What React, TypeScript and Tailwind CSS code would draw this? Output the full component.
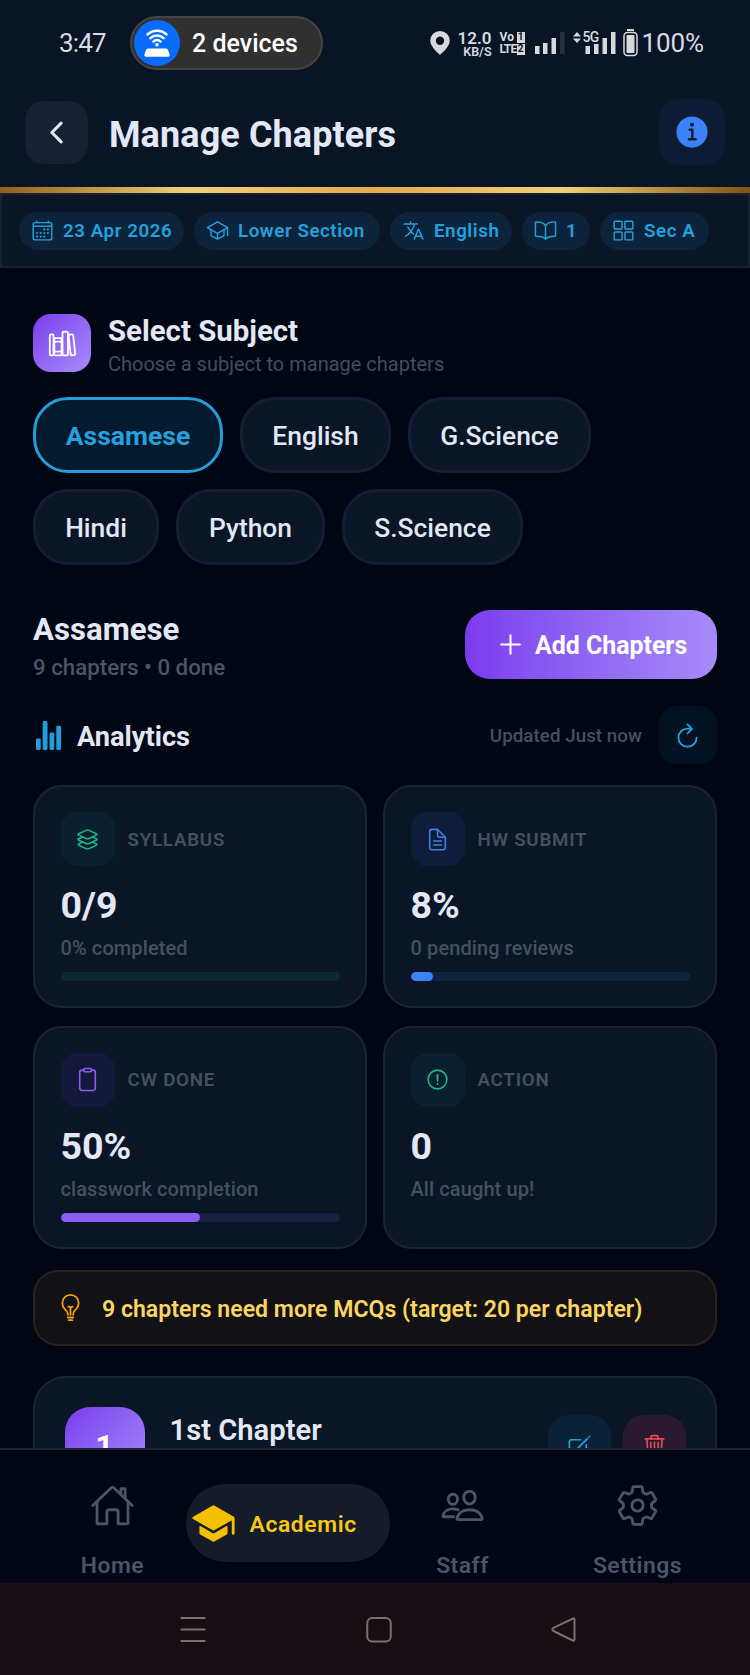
import type { ReactNode } from 'react';
import type { IconType } from 'react-icons';
import {
  IoAdd,
  IoAlertCircleOutline,
  IoBookOutline,
  IoBulbOutline,
  IoCalendarOutline,
  IoChevronBack,
  IoClipboardOutline,
  IoCreateOutline,
  IoDocumentTextOutline,
  IoGridOutline,
  IoHomeOutline,
  IoInformationCircle,
  IoLanguageOutline,
  IoLayersOutline,
  IoLibraryOutline,
  IoPeopleOutline,
  IoRefresh,
  IoSchool,
  IoSchoolOutline,
  IoSettingsOutline,
  IoStatsChart,
  IoTrashOutline,
} from 'react-icons/io5';

function StatusBar() {
  return (
    <div className="flex h-[86px] shrink-0 items-center pl-[59px] pr-[46px] text-[#d6dae2]">
      <span className="w-[71px] text-[26px] leading-none tracking-[-0.8px]">3:47</span>
      <div className="flex h-[54px] w-[193px] items-center rounded-full border-2 border-[#454545] bg-[#303030] pl-[2px]">
        <svg viewBox="0 0 46 46" className="size-[46px] shrink-0">
          <circle cx="23" cy="23" r="23" fill="#0a6cff" />
          <g fill="none" stroke="#fff" strokeWidth="2.4" strokeLinecap="round">
            <path d="M13.5 14.5a14 14 0 0 1 19 0" />
            <path d="M16.4 18.2a9.4 9.4 0 0 1 13.2 0" />
            <path d="M19.4 21.6a5 5 0 0 1 7.2 0" />
          </g>
          <circle cx="23" cy="24.8" r="1.8" fill="#fff" />
          <path d="M14 28.5h18a2 2 0 0 1 2 1.6l1.6 4.4a1.6 1.6 0 0 1-1.6 2.2H12a1.6 1.6 0 0 1-1.6-2.2L12 30.1a2 2 0 0 1 2-1.6z" fill="#fff" />
        </svg>
        <span className="ml-[12px] whitespace-nowrap text-[25px] font-medium leading-none text-white">2 devices</span>
      </div>
      <div className="ml-auto flex items-center">
        <svg viewBox="0 0 20 24" className="h-[24px] w-[20px] fill-[#d8d8da]">
          <path fillRule="evenodd" d="M10 0a9.8 9.8 0 0 1 9.8 9.8C19.8 16 10 24 10 24S.2 16 .2 9.8A9.8 9.8 0 0 1 10 0zm0 5.5a4.2 4.2 0 1 0 0 8.4 4.2 4.2 0 0 0 0-8.4z" />
        </svg>
        <div className="ml-[9px] flex w-[33px] flex-col items-end pt-[2px] font-semibold">
          <span className="text-[17px] leading-[14px]">12.0</span>
          <span className="text-[12.5px] leading-[13px]">KB/S</span>
        </div>
        <div className="ml-[8px] grid grid-cols-[16px_8px] gap-x-[1px] gap-y-[1px] text-[12px] font-bold leading-[11px]">
          <span className="scale-y-110 tracking-[0.2px]">Vo</span>
          <span className="flex h-[11px] w-[8px] items-center justify-center bg-[#d8d8da] text-[10px] leading-none text-[#0a1424]">1</span>
          <span className="scale-y-110 tracking-[-0.8px]">LTE</span>
          <span className="flex h-[11px] w-[8px] items-center justify-center bg-[#d8d8da] text-[10px] leading-none text-[#0a1424]">2</span>
        </div>
        <svg viewBox="0 0 30 22" className="ml-[10px] h-[22px] w-[30px] fill-[#d8d8da]">
          <rect x="0" y="14" width="4.5" height="8" />
          <rect x="8" y="11" width="4.5" height="11" />
          <rect x="16.5" y="6" width="4.5" height="16" />
          <rect x="25" y="0" width="4.5" height="22" fill="#263040" />
        </svg>
        <div className="relative ml-[8px] h-[24px] w-[43px]">
          <svg viewBox="0 0 43 24" className="size-full fill-[#d8d8da]">
            <path d="M4 1l4 4.5H0zM4 12L0 7.5h8z" />
            <rect x="12.5" y="15" width="4.5" height="8" />
            <rect x="21" y="13" width="4.5" height="10" />
            <rect x="29.5" y="7" width="4.5" height="16" />
            <rect x="38" y="1" width="4.5" height="22" />
          </svg>
          <span className="absolute left-[10px] top-[1px] text-[14px] font-medium leading-[11px] tracking-[-0.8px]">5G</span>
        </div>
        <svg viewBox="0 0 15 28" className="ml-[7px] h-[28px] w-[15px] fill-[#d8d8da]">
          <rect x="4" y="0" width="7" height="2" />
          <rect x="1" y="3.5" width="13" height="23" rx="3.5" fill="none" stroke="#d8d8da" strokeWidth="1.5" />
          <rect x="3.5" y="6" width="8" height="18" rx="1" />
        </svg>
        <span className="ml-[4px] text-[26px] leading-none tracking-[-0.1px]">100%</span>
      </div>
    </div>
  );
}

function Header() {
  return (
    <header className="flex h-[101px] shrink-0 items-start justify-between px-[25px]">
      <div className="flex items-center pt-[15px]">
        <div className="flex size-[63px] items-center justify-center rounded-[19px] bg-[#172133] text-[#e2e8f0]">
          <IoChevronBack size={33} />
        </div>
        <h1 className="ml-[21px] mt-[5px] text-[36px] font-bold leading-none tracking-[0.1px] text-[#e2e8f5]">Manage Chapters</h1>
      </div>
      <div className="mt-[13px] flex size-[66px] items-center justify-center rounded-[20px] bg-[#0d1c34] text-[#3b82f6]">
        <IoInformationCircle size={40} />
      </div>
    </header>
  );
}

const filters: { icon: IconType; label: string; width: string }[] = [
  { icon: IoCalendarOutline, label: '23 Apr 2026', width: 'w-[165px]' },
  { icon: IoSchoolOutline, label: 'Lower Section', width: 'w-[186px]' },
  { icon: IoLanguageOutline, label: 'English', width: 'w-[122px]' },
  { icon: IoBookOutline, label: '1', width: 'w-[68px]' },
  { icon: IoGridOutline, label: 'Sec A', width: 'w-[109px]' },
];

function FilterStrip() {
  return (
    <div className="flex h-[75px] shrink-0 items-center gap-[10px] border-2 border-[#162036] bg-[#0a1525] px-[17px]">
      {filters.map(({ icon: Icon, label, width }) => (
        <div key={label} className={`flex h-[38px] shrink-0 items-center gap-[9px] rounded-[19px] bg-[#0c243b] pl-[12px] text-[#25a0dc] ${width}`}>
          <Icon size={23} className="shrink-0" />
          <span className="mt-[1px] whitespace-nowrap text-[18.75px] font-semibold leading-none tracking-[0.55px]">{label}</span>
        </div>
      ))}
    </div>
  );
}

const subjects = [
  { name: 'Assamese', width: 'w-[190px]', active: true },
  { name: 'English', width: 'w-[151px]' },
  { name: 'G.Science', width: 'w-[183px]' },
  { name: 'Hindi', width: 'w-[126px]' },
  { name: 'Python', width: 'w-[149px]' },
  { name: 'S.Science', width: 'w-[181px]' },
];

function SubjectPicker() {
  return (
    <section>
      <div className="flex h-[58px] items-start">
        <div className="flex size-[58px] items-center justify-center rounded-[18px] bg-linear-to-br from-[#7c3aed] to-[#a78bfa] text-white">
          <IoLibraryOutline size={29} />
        </div>
        <div className="ml-[17px]">
          <h2 className="text-[29.4px] font-bold leading-[34px] text-[#e2e8f5]">Select Subject</h2>
          <p className="text-[20px] leading-[32px] text-[#434d5e]">Choose a subject to manage chapters</p>
        </div>
      </div>
      <div className="mt-[25px] flex flex-wrap gap-x-[17px] gap-y-[16px]">
        {subjects.map(({ name, width, active }) => (
          <div
            key={name}
            className={`flex h-[76px] items-center justify-center rounded-[35px] border-3 pt-[2px] leading-none ${width} ${
              active
                ? 'border-[#259ddb] bg-[#041a2e] text-[26.5px] font-bold text-[#25a0dc]'
                : 'border-[#151d35] bg-[#0a1525] text-[26.4px] font-medium text-[#e2e8f5]'
            }`}
          >
            {name}
          </div>
        ))}
      </div>
    </section>
  );
}

interface StatProps {
  icon: IconType;
  tint: string;
  label: string;
  value: string;
  note: string;
  track?: string;
  fill?: string;
  percent?: number;
}

function StatCard({ icon: Icon, tint, label, value, note, track, fill, percent = 0 }: StatProps) {
  return (
    <div className="h-[223px] rounded-[29px] border-2 border-[#182338] bg-[#0a1525] px-[25.5px] pt-[25px]">
      <div className="flex items-center gap-[13px]">
        <div className={`flex size-[54px] items-center justify-center rounded-[16px] ${tint}`}>
          <Icon size={25} />
        </div>
        <span className="mt-[2px] text-[18.75px] font-semibold leading-none tracking-[0.75px] text-[#455061]">{label}</span>
      </div>
      <div className="mt-[19px] text-[37.5px] font-bold leading-[40px] text-[#e2e8f5]">{value}</div>
      <div className="mt-[11px] text-[20px] font-medium leading-[24px] tracking-[0.1px] text-[#455061]">{note}</div>
      {track && (
        <div className={`mt-[12px] h-[9px] overflow-hidden rounded-full ${track}`}>
          <div className={`h-full rounded-full ${fill}`} style={{ width: `${percent}%` }} />
        </div>
      )}
    </div>
  );
}

const stats: StatProps[] = [
  { icon: IoLayersOutline, tint: 'bg-[#0a2030] text-[#20b489]', label: 'SYLLABUS', value: '0/9', note: '0% completed', track: 'bg-[#0c2833]', fill: 'bg-[#10b981]', percent: 0 },
  { icon: IoDocumentTextOutline, tint: 'bg-[#0e1d39] text-[#427fe4]', label: 'HW SUBMIT', value: '8%', note: '0 pending reviews', track: 'bg-[#10233f]', fill: 'bg-[#3b82f6]', percent: 8 },
  { icon: IoClipboardOutline, tint: 'bg-[#14183a] text-[#8b5fe8]', label: 'CW DONE', value: '50%', note: 'classwork completion', track: 'bg-[#1a1e40]', fill: 'bg-[#8b5cf6]', percent: 50 },
  { icon: IoAlertCircleOutline, tint: 'bg-[#0a2030] text-[#20b489]', label: 'ACTION', value: '0', note: 'All caught up!' },
];

function Analytics() {
  return (
    <section>
      <div className="mt-[27px] flex h-[58px] items-center">
        <IoStatsChart size={31} className="text-[#219ddb]" />
        <h3 className="ml-[13px] mt-[5px] text-[27.2px] font-bold leading-none text-[#e2e8f5]">Analytics</h3>
        <span className="ml-auto mt-[3px] text-[18.75px] font-medium leading-none tracking-[0.05px] text-[#455061]">Updated Just now</span>
        <div className="ml-[17px] flex size-[58px] items-center justify-center rounded-[18px] bg-[#021222] text-[#25a0dc]">
          <IoRefresh size={29} className="-ml-[1px]" />
        </div>
      </div>
      <div className="mt-[21px] grid grid-cols-2 gap-x-[16px] gap-y-[17.5px]">
        {stats.map((stat) => (
          <StatCard key={stat.label} {...stat} />
        ))}
      </div>
    </section>
  );
}

function ChapterCard() {
  return (
    <div className="mt-[30px] flex h-[180px] shrink-0 items-start rounded-[33px] border-2 border-[#182338] bg-[#0a1525] pl-[29.5px] pr-[29px] pt-[29px]">
      <div className="flex size-[80px] items-center justify-center rounded-[25px] bg-linear-to-br from-[#7c3aed] to-[#a78bfa] pt-[2px] text-[31px] font-bold text-white">1</div>
      <div className="ml-[25px] mt-[7px] text-[29.2px] font-semibold leading-[32px] text-[#e2e8f5]">1st Chapter</div>
      <div className="ml-auto mt-[8px] flex gap-[12px]">
        <div className="flex size-[63px] items-center justify-center rounded-[21px] bg-[#0a2238] text-[#25a0dc]">
          <IoCreateOutline size={27} />
        </div>
        <div className="flex size-[63px] items-center justify-center rounded-[21px] bg-[#2b1a2d] text-[#e5485d]">
          <IoTrashOutline size={27} />
        </div>
      </div>
    </div>
  );
}

function NavItem({ icon: Icon, label }: { icon: IconType; label: string }) {
  return (
    <div className="flex w-[175px] flex-col items-center pt-[33px] text-[#4a5567]">
      <Icon size={45} />
      <span className="mt-[24px] text-[22.9px] font-semibold leading-[28px] tracking-[0.5px]">{label}</span>
    </div>
  );
}

function TabBar() {
  return (
    <nav className="flex h-[135px] shrink-0 border-t-2 border-[#1a2233] px-[25px]">
      <NavItem icon={IoHomeOutline} label="Home" />
      <div className="flex w-[175px] justify-center pt-[34px]">
        <div className="-mx-[15px] flex h-[78px] w-[204px] shrink-0 items-center rounded-full bg-[#151b28] pl-[5px] text-[#f5c000]">
          <IoSchool size={45} />
          <span className="ml-[14px] mt-[4px] text-[22.9px] font-semibold leading-none tracking-[0.6px] text-[#f7c81c]">Academic</span>
        </div>
      </div>
      <NavItem icon={IoPeopleOutline} label="Staff" />
      <NavItem icon={IoSettingsOutline} label="Settings" />
    </nav>
  );
}

function Key({ children }: { children: ReactNode }) {
  return (
    <svg viewBox="0 0 28 28" className="size-[28px] fill-none stroke-[#77716f]" strokeWidth="2" strokeLinejoin="round">
      {children}
    </svg>
  );
}

function SystemNav() {
  return (
    <div className="flex h-[92px] shrink-0 justify-between bg-[#150f14] pl-[179px] pr-[173px] pt-[32px]">
      <Key>
        <path d="M1.5 3h25M1.5 14.5h25M1.5 26h25" />
      </Key>
      <Key>
        <rect x="3.25" y="3" width="23.5" height="23.5" rx="5" />
      </Key>
      <Key>
        <path d="M24 3.5c1-.5 1.5 0 1.5 1v20c0 1.3-.7 1.7-1.8 1L4.5 16c-1.5-1-1.5-2.2 0-3.2z" />
      </Key>
    </div>
  );
}

export default function App() {
  return (
    <div className="flex h-[1675px] w-[750px] flex-col overflow-hidden bg-[#000614] font-['Roboto',sans-serif]">
      <div className="shrink-0 bg-[#091424]">
        <StatusBar />
        <Header />
        <div className="h-[6px] bg-[linear-gradient(90deg,#8f611c_0%,#f2cf76_25%,#e2ab48_50%,#f2cf76_75%,#805314_100%)]" />
      </div>
      <FilterStrip />
      <main className="flex min-h-0 flex-1 flex-col overflow-hidden px-[33px] pt-[46px]">
        <SubjectPicker />
        <div className="mt-[45px] flex h-[69px] shrink-0 items-start justify-between">
          <div>
            <h2 className="mt-[2px] text-[31.2px] font-bold leading-[36px] text-[#e2e8f5]">Assamese</h2>
            <p className="mt-[5px] text-[22.3px] font-medium leading-[28px] text-[#4a5567]">9 chapters • 0 done</p>
          </div>
          <div className="flex h-[69px] w-[252px] items-center rounded-[25px] bg-linear-to-r from-[#7c3aed] to-[#a78bfa] pl-[29px] text-white">
            <IoAdd size={33} />
            <span className="ml-[8px] mt-[4px] text-[24.9px] font-bold leading-none">Add Chapters</span>
          </div>
        </div>
        <Analytics />
        <div className="mt-[21px] flex h-[76px] shrink-0 items-center rounded-[25px] border-2 border-[#29221c] bg-[#121116] pl-[21px] text-[#f59e0b]">
          <IoBulbOutline size={29} />
          <span className="ml-[17px] mt-[5px] text-[23.1px] font-semibold leading-none text-[#fcd660]">
            9 chapters need more MCQs (target: 20 per chapter)
          </span>
        </div>
        <ChapterCard />
      </main>
      <TabBar />
      <SystemNav />
    </div>
  );
}
